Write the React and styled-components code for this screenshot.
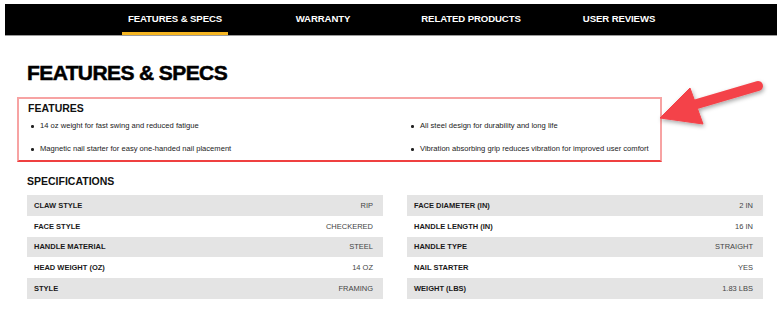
import React from "react";
import styled, { createGlobalStyle } from "styled-components";

const tabs = ["FEATURES & SPECS", "WARRANTY", "RELATED PRODUCTS", "USER REVIEWS"];

const features = [
  "14 oz weight for fast swing and reduced fatigue",
  "All steel design for durability and long life",
  "Magnetic nail starter for easy one-handed nail placement",
  "Vibration absorbing grip reduces vibration for improved user comfort",
];

const specsLeft = [
  ["CLAW STYLE", "RIP"],
  ["FACE STYLE", "CHECKERED"],
  ["HANDLE MATERIAL", "STEEL"],
  ["HEAD WEIGHT (OZ)", "14 OZ"],
  ["STYLE", "FRAMING"],
];

const specsRight = [
  ["FACE DIAMETER (IN)", "2 IN"],
  ["HANDLE LENGTH (IN)", "16 IN"],
  ["HANDLE TYPE", "STRAIGHT"],
  ["NAIL STARTER", "YES"],
  ["WEIGHT (LBS)", "1.83 LBS"],
];

function SpecTable({ rows }) {
  return (
    <Table>
      {rows.map(([label, value], i) => (
        <Row key={label} $shaded={i % 2 === 0}>
          <Label>{label}</Label>
          <Value>{value}</Value>
        </Row>
      ))}
    </Table>
  );
}

function Arrow() {
  return (
    <ArrowSvg width="777" height="320" viewBox="0 0 777 320">
      <defs>
        <filter id="sh" x="-20%" y="-20%" width="140%" height="140%">
          <feDropShadow dx="1" dy="2" stdDeviation="2" floodColor="#000" floodOpacity="0.35" />
        </filter>
      </defs>
      <g filter="url(#sh)" fill="#f4434a" stroke="#f4434a">
        <line x1="758" y1="86" x2="690" y2="106" strokeWidth="10" strokeLinecap="round" />
        <polygon points="660,118 690,88 703,124" strokeWidth="1" strokeLinejoin="round" />
      </g>
    </ArrowSvg>
  );
}

export default function App() {
  return (
    <Page>
      <GlobalStyle />
      <Nav>
        {tabs.map((t, i) => (
          <Tab key={t}>
            <TabLabel $active={i === 0}>{t}</TabLabel>
          </Tab>
        ))}
      </Nav>
      <Content>
        <Title>FEATURES &amp; SPECS</Title>
        <FeatureBox>
          <SubTitle>FEATURES</SubTitle>
          <FeatureGrid>
            {features.map((f) => (
              <Bullet key={f}>{f}</Bullet>
            ))}
          </FeatureGrid>
        </FeatureBox>
        <SpecTitle>SPECIFICATIONS</SpecTitle>
        <Tables>
          <SpecTable rows={specsLeft} />
          <SpecTable rows={specsRight} />
        </Tables>
      </Content>
      <Arrow />
    </Page>
  );
}

const GlobalStyle = createGlobalStyle`
  html, body {
    margin: 0;
    padding: 0;
    background: #fff;
  }
  body {
    font-family: "Liberation Sans", Arial, sans-serif;
    color: #1a1a1a;
  }
`;

const Page = styled.div`
  position: relative;
  width: 777px;
  height: 320px;
  padding: 4px 0 0 5px;
  box-sizing: border-box;
  overflow: hidden;
`;

const Nav = styled.div`
  display: flex;
  height: 31px;
  background: #000;
  padding-left: 96px;
  border-bottom: 1px solid #9a9a9a;
`;

const Tab = styled.div`
  width: 148px;
  display: flex;
  justify-content: center;
`;

const TabLabel = styled.div`
  display: flex;
  align-items: center;
  padding: 0 6px;
  color: #fff;
  font-size: 9.6px;
  font-weight: bold;
  letter-spacing: -0.1px;
  border-bottom: 3px solid ${(p) => (p.$active ? "#f5b521" : "transparent")};
`;

const Content = styled.div`
  padding: 0 14px 0 22px;
`;

const Title = styled.h1`
  margin: 24px 0 0;
  font-size: 21px;
  line-height: 26px;
  font-weight: 900;
  letter-spacing: -0.6px;
  color: #000;
  -webkit-text-stroke: 0.5px #000;
`;

const FeatureBox = styled.div`
  margin: 11px 0 0 -10px;
  width: 645px;
  height: 65px;
  box-sizing: border-box;
  border: 2px solid #f7a3a3;
  border-bottom-color: #ef4040;
  padding: 2px 0 0 9px;
`;

const SubTitle = styled.h3`
  margin: 0;
  font-size: 10.5px;
  line-height: 14px;
  font-weight: bold;
  color: #111;
`;

const FeatureGrid = styled.div`
  display: grid;
  grid-template-columns: 380px 1fr;
  row-gap: 13px;
  margin-top: 6px;
`;

const Bullet = styled.div`
  position: relative;
  padding-left: 12px;
  font-size: 7.6px;
  line-height: 10px;
  color: #222;
  white-space: nowrap;

  &::before {
    content: "";
    position: absolute;
    left: 3px;
    top: 4px;
    width: 2.5px;
    height: 2.5px;
    border-radius: 50%;
    background: #222;
  }
`;

const SpecTitle = styled.h3`
  margin: 12px 0 0;
  font-size: 10.5px;
  line-height: 14px;
  font-weight: bold;
  color: #111;
`;

const Tables = styled.div`
  display: grid;
  grid-template-columns: 356px 356px;
  column-gap: 24px;
  margin-top: 7px;
`;

const Table = styled.div`
  display: flex;
  flex-direction: column;
`;

const Row = styled.div`
  display: flex;
  justify-content: space-between;
  align-items: center;
  height: 20.8px;
  padding: 0 10px 0 7px;
  background: ${(p) => (p.$shaded ? "#e4e4e4" : "#fff")};
`;

const Label = styled.span`
  font-size: 7.5px;
  font-weight: bold;
  color: #1a1a1a;
`;

const Value = styled.span`
  font-size: 7.5px;
  color: #444;
`;

const ArrowSvg = styled.svg`
  position: absolute;
  left: 0;
  top: 0;
  pointer-events: none;
`;
